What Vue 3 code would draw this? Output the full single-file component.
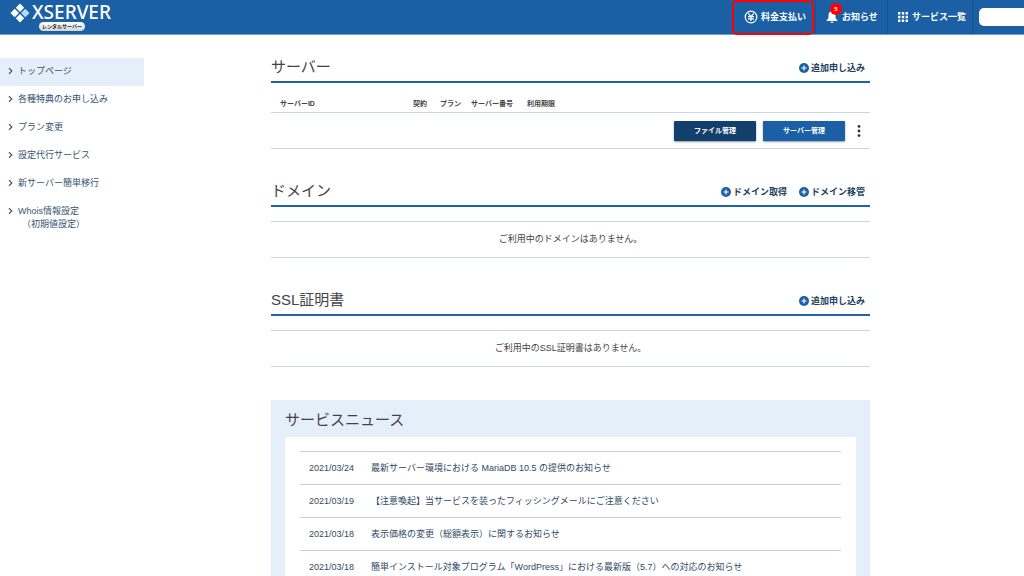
<script setup>
const menu = [
  { label: 'トップページ', active: true },
  { label: '各種特典のお申し込み' },
  { label: 'プラン変更' },
  { label: '設定代行サービス' },
  { label: '新サーバー簡単移行' },
  { label: 'Whois情報設定', sub: '（初期値設定）' },
]
const columns = ['サーバーID', '契約', 'プラン', 'サーバー番号', '利用期限']
const sections = [
  { title: 'ドメイン', links: ['ドメイン取得', 'ドメイン移管'], empty: 'ご利用中のドメインはありません。' },
  { title: 'SSL証明書', links: ['追加申し込み'], empty: 'ご利用中のSSL証明書はありません。' },
]
const news = [
  { date: '2021/03/24', title: '最新サーバー環境における MariaDB 10.5 の提供のお知らせ' },
  { date: '2021/03/19', title: '【注意喚起】当サービスを装ったフィッシングメールにご注意ください' },
  { date: '2021/03/18', title: '表示価格の変更（総額表示）に関するお知らせ' },
  { date: '2021/03/18', title: '簡単インストール対象プログラム「WordPress」における最新版（5.7）への対応のお知らせ' },
]
</script>

<template>
  <div class="page">
    <header class="topbar">
      <a class="brand" href="#">
        <svg class="mark" viewBox="0 0 20 20" aria-hidden="true">
          <path d="M10 0.5 14.2 4.7 10 8.9 5.8 4.7Z" fill="#fff" />
          <path d="M4.7 5.8 8.9 10 4.7 14.2 0.5 10Z" fill="#fff" />
          <path d="M15.3 5.8 19.5 10 15.3 14.2 11.1 10Z" fill="#b9dcf5" />
          <path d="M10 11.1 14.2 15.3 10 19.5 5.8 15.3Z" fill="#fff" />
        </svg>
        <span class="words">
          <span class="name">XSERVER</span>
          <span class="tag">レンタルサーバー</span>
        </span>
      </a>
      <nav class="tools">
        <a class="tool pay" href="#">
          <svg class="yen" viewBox="0 0 14 14" aria-hidden="true">
            <circle cx="7" cy="7" r="5.8" />
            <path d="M4.3 3.4 7 6.6 9.7 3.4M7 6.6V11M4 6.6H10M4 8.8H10" />
          </svg>
          料金支払い
        </a>
        <a class="tool notice" href="#">
          <span class="bellwrap">
            <svg class="bell" viewBox="0 0 12 14" aria-hidden="true">
              <path d="M6 1C3.6 1.4 2.5 3 2.5 5.2V8L0.7 10.2V11H11.3V10.2L9.5 8V5.2C9.5 3 8.4 1.4 6 1ZM4.5 11.8H7.5C7.3 13.5 4.7 13.5 4.5 11.8Z" fill="#fff" />
            </svg>
            <span class="count">5</span>
          </span>
          お知らせ
        </a>
        <a class="tool services" href="#">
          <svg class="dots" viewBox="0 0 10 10" aria-hidden="true">
            <path d="M0 0h2.4v2.4H0zM3.8 0h2.4v2.4H3.8zM7.6 0H10v2.4H7.6zM0 3.8h2.4v2.4H0zM3.8 3.8h2.4v2.4H3.8zM7.6 3.8H10v2.4H7.6zM0 7.6h2.4V10H0zM3.8 7.6h2.4V10H3.8zM7.6 7.6H10V10H7.6z" fill="#fff" />
          </svg>
          サービス一覧
        </a>
        <div class="account"><input type="text" aria-label="アカウント" /></div>
      </nav>
    </header>

    <div class="body">
      <nav class="side">
        <a v-for="m in menu" :key="m.label" href="#" :class="{ active: m.active }">
          <svg class="chev" viewBox="0 0 5 8" aria-hidden="true"><path d="M1 1.2 3.8 4 1 6.8" /></svg>
          <span>{{ m.label }}<span v-if="m.sub" class="sub">{{ m.sub }}</span></span>
        </a>
      </nav>

      <main class="main">
        <section class="block">
          <div class="head">
            <h2>サーバー</h2>
            <a class="add" href="#">
              <svg viewBox="0 0 10 10" aria-hidden="true"><circle cx="5" cy="5" r="5" /><path d="M5 2.4V7.6M2.4 5H7.6" /></svg>追加申し込み
            </a>
          </div>
          <table class="servers">
            <colgroup>
              <col class="c-id" /><col class="c-contract" /><col class="c-plan" /><col class="c-no" /><col class="c-limit" /><col />
            </colgroup>
            <thead>
              <tr><th v-for="c in columns" :key="c">{{ c }}</th><th></th></tr>
            </thead>
            <tbody>
              <tr>
                <td></td><td></td><td></td><td></td><td></td>
                <td>
                  <div class="actions">
                    <button class="btn dark" type="button">ファイル管理</button>
                    <button class="btn" type="button">サーバー管理</button>
                    <button class="more" type="button" aria-label="メニュー">
                      <svg viewBox="0 0 4 12" aria-hidden="true"><circle cx="2" cy="1.4" r="1.4" /><circle cx="2" cy="6" r="1.4" /><circle cx="2" cy="10.6" r="1.4" /></svg>
                    </button>
                  </div>
                </td>
              </tr>
            </tbody>
          </table>
        </section>

        <section v-for="s in sections" :key="s.title" class="block">
          <div class="head">
            <h2>{{ s.title }}</h2>
            <a v-for="l in s.links" :key="l" class="add" href="#">
              <svg viewBox="0 0 10 10" aria-hidden="true"><circle cx="5" cy="5" r="5" /><path d="M5 2.4V7.6M2.4 5H7.6" /></svg>{{ l }}
            </a>
          </div>
          <p class="empty">{{ s.empty }}</p>
        </section>

        <section class="news">
          <h2>サービスニュース</h2>
          <ul>
            <li v-for="n in news" :key="n.title">
              <time>{{ n.date }}</time>
              <a href="#">{{ n.title }}</a>
            </li>
          </ul>
        </section>
      </main>
    </div>
  </div>
</template>

<style>
body {
  margin: 0;
  background: #fff;
}
html {
  scrollbar-width: none;
}
</style>

<style scoped>
.page {
  font-family: "Liberation Sans", "Noto Sans CJK JP", sans-serif;
  font-size: 9px;
  line-height: 13px;
  color: #444;
}
a {
  color: inherit;
  text-decoration: none;
}
.topbar {
  box-sizing: border-box;
  display: flex;
  justify-content: space-between;
  height: 35px;
  background: #1b60a4;
  border-bottom: 1px solid #6f9dcb;
  color: #fff;
}
.brand {
  display: flex;
  gap: 2px;
  padding: 3px 0 0 10px;
}
.mark {
  width: 20px;
  height: 20px;
}
.words {
  display: flex;
  flex-direction: column;
  align-items: flex-start;
}
.name {
  font-family: "Noto Sans", sans-serif;
  font-size: 19px;
  font-weight: 500;
  line-height: 19px;
}
.tag {
  margin-left: 7px;
  padding: 0 3px;
  border-radius: 5px;
  background: linear-gradient(#fff, #d5d5d5);
  color: #222;
  font-size: 5px;
  font-weight: 700;
  line-height: 9px;
}
.tools {
  display: flex;
}
.tool {
  position: relative;
  box-sizing: border-box;
  display: flex;
  align-items: center;
  font-weight: 700;
  white-space: nowrap;
  border-right: 1px solid #17528c;
}
.pay {
  width: 84px;
  padding-left: 12px;
  gap: 3px;
}
.pay::after {
  content: "";
  position: absolute;
  inset: 0 1px -1px 0;
  border: 2px solid #f00;
  border-radius: 5px;
}
.yen {
  width: 14px;
  height: 14px;
  fill: none;
  stroke: #fff;
  stroke-width: 1.2;
}
.notice {
  width: 72px;
  padding-left: 10px;
  gap: 4px;
}
.bellwrap {
  position: relative;
  display: flex;
}
.bell {
  width: 12px;
  height: 14px;
}
.count {
  position: absolute;
  top: -7px;
  left: 4px;
  width: 12px;
  height: 12px;
  border-radius: 50%;
  background: #f00;
  font-size: 6px;
  line-height: 12px;
  text-align: center;
}
.services {
  width: 85px;
  padding-left: 10px;
  gap: 4px;
}
.dots {
  width: 10px;
  height: 10px;
}
.account {
  box-sizing: border-box;
  display: flex;
  align-items: center;
  width: 51px;
  padding-left: 6px;
  overflow: hidden;
}
.account input {
  box-sizing: border-box;
  flex: none;
  width: 120px;
  height: 18px;
  border: 0;
  border-radius: 5px;
  background: #fff;
}
.body {
  display: grid;
  grid-template-columns: 144px minmax(0, 1fr);
}
.side {
  display: flex;
  flex-direction: column;
  padding-top: 23px;
  color: #36546f;
}
.side a {
  display: flex;
  gap: 5px;
  padding: 7px 0 8px 8px;
}
.side .active {
  background: #e4eff9;
}
.chev {
  width: 5px;
  height: 8px;
  margin-top: 2px;
  fill: none;
  stroke: #36546f;
  stroke-width: 1.2;
}
.sub {
  display: block;
  padding-left: 4px;
}
.main {
  padding: 18px 154px 0 127px;
}
.block {
  margin-bottom: 28px;
}
.head {
  display: flex;
  align-items: center;
  gap: 12px;
  height: 28px;
  padding-right: 5px;
  border-bottom: 2px solid #1f64a8;
}
h2 {
  margin: 0;
  font-size: 15px;
  font-weight: 400;
  line-height: 22px;
  color: #444;
}
.head h2 {
  margin-right: auto;
}
.add {
  display: flex;
  align-items: center;
  gap: 2px;
  padding-top: 2px;
  color: #1e3f60;
  font-weight: 700;
}
.add svg {
  width: 10px;
  height: 10px;
  fill: #1b60a4;
}
.add path {
  stroke: #fff;
  stroke-width: 1.2;
}
.servers {
  width: 100%;
  margin-top: 13px;
  border-collapse: separate;
  border-spacing: 0;
  table-layout: fixed;
}
.c-id {
  width: 142px;
}
.c-contract {
  width: 27px;
}
.c-plan {
  width: 31px;
}
.c-no {
  width: 56px;
}
.c-limit {
  width: 40px;
}
th {
  height: 16px;
  padding: 0;
  border-bottom: 1px solid #c6d6e5;
  font-size: 7px;
  line-height: 10px;
  text-align: left;
  white-space: nowrap;
}
th:first-child {
  padding-left: 9px;
}
td {
  height: 35px;
  padding: 0;
  border-bottom: 1px solid #c6d6e5;
}
.actions {
  display: flex;
  justify-content: flex-end;
  align-items: center;
  gap: 7px;
  padding-right: 4px;
}
.btn {
  width: 82px;
  height: 20px;
  padding: 0;
  border: 0;
  border-radius: 1px;
  background: #1b60a4;
  box-shadow: 0 1px 2px #8b9aa8;
  color: #fff;
  font: inherit;
  font-size: 7px;
  font-weight: 700;
}
.dark {
  background: #123f6b;
}
.more {
  display: flex;
  justify-content: center;
  width: 14px;
  padding: 0;
  border: 0;
  background: none;
}
.more svg {
  width: 4px;
  height: 12px;
  fill: #333;
}
.empty {
  margin: 14px 0 0;
  padding: 11px 0;
  border: solid #c6d6e5;
  border-width: 1px 0;
  text-align: center;
}
.news {
  margin-top: 33px;
  padding: 9px 14px 14px;
  background: #e4eff9;
}
.news ul {
  margin: 6px 0 0;
  padding: 14px 15px;
  background: #fff;
  list-style: none;
}
.news li {
  display: flex;
  padding: 10px 9px 9px;
  border-top: 1px solid #bfd0e1;
  color: #2f4a63;
}
.news time {
  width: 62px;
}
</style>
